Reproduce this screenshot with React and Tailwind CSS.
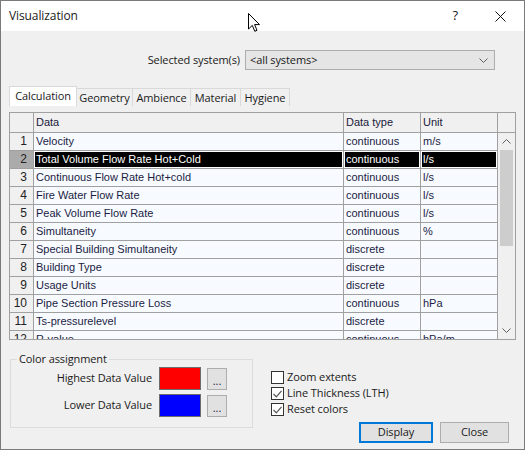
import React from "react";

const ui = "font-['Open_Sans',sans-serif] text-[11px] tracking-[-0.1px]";
const cell = "font-['Liberation_Sans',Arial,sans-serif]";

const rows = [
  ["Velocity", "continuous", "m/s"],
  ["Total Volume Flow Rate Hot+Cold", "continuous", "l/s"],
  ["Continuous Flow Rate Hot+cold", "continuous", "l/s"],
  ["Fire Water Flow Rate", "continuous", "l/s"],
  ["Peak Volume Flow Rate", "continuous", "l/s"],
  ["Simultaneity", "continuous", "%"],
  ["Special Building Simultaneity", "discrete", ""],
  ["Building Type", "discrete", ""],
  ["Usage Units", "discrete", ""],
  ["Pipe Section Pressure Loss", "continuous", "hPa"],
  ["Ts-pressurelevel", "discrete", ""],
  ["R-value", "continuous", "hPa/m"],
];

const tabs = [
  ["Calculation", "w-[68px]"],
  ["Geometry", "w-[56px]"],
  ["Ambience", "w-[58px]"],
  ["Material", "w-[50px]"],
  ["Hygiene", "w-[49px]"],
];

export default function App() {
  return (
    <div className="relative h-[450px] w-[525px] border border-[#7a7a7a] bg-[#f0f0f0] text-[#1a1a1a]">
      <TitleBar />

      <div className={`mt-[19px] flex h-[20px] items-center justify-end pr-[29px] ${ui}`}>
        <span className="mr-[5px]">Selected system(s)</span>
        <div className="flex h-[20px] w-[250px] items-center justify-between border border-[#adadad] bg-[#e5e5e5] pl-[4px] pr-[6px]">
          <span>&lt;all systems&gt;</span>
          <Chevron className="h-[5px] w-[9px]" />
        </div>
      </div>

      <div className={`ml-[8px] mt-[16px] flex h-[20px] items-end ${ui}`}>
        {tabs.map(([t, w], i) =>
          i === 0 ? (
            <div key={t} className={`flex h-[20px] items-center justify-center border border-b-0 border-[#d9d9d9] bg-white ${w}`}>
              {t}
            </div>
          ) : (
            <div key={t} className={`flex h-[18px] items-center justify-center border border-b-0 border-l-0 border-[#d9d9d9] pt-[2px] ${w}`}>
              {t}
            </div>
          )
        )}
      </div>

      <DataTable />

      <div className={`flex ${ui}`}>
        <ColorGroup />
        <div className="ml-[18px] mt-[31px] flex w-[238px] flex-col">
          <Check label="Zoom extents" />
          <Check label="Line Thickness (LTH)" checked />
          <Check label="Reset colors" checked />
          <div className="mt-[3px] flex justify-end gap-[7px]">
            <button className="h-[21px] w-[74px] border-2 border-[#0078d7] bg-[#e1e1e1]">Display</button>
            <button className="h-[21px] w-[69px] border border-[#adadad] bg-[#e1e1e1]">Close</button>
          </div>
        </div>
      </div>

      <svg className="absolute left-[247px] top-[12px]" width="13" height="20" viewBox="0 0 13 20">
        <path d="M0.5 0.5 L0.5 16 L4.3 12.4 L6.8 18.3 L9 17.3 L6.6 11.6 L11.5 11.6 Z" fill="white" stroke="black" strokeWidth="1" />
      </svg>
    </div>
  );
}

function TitleBar() {
  return (
    <div className={`flex h-[30px] items-center bg-white pl-[8px] ${ui} text-[12px]`}>
      <span className="flex-1">Visualization</span>
      <span className="mr-[37px] text-[13px]">?</span>
      <svg className="mr-[18px]" width="11" height="11" viewBox="0 0 11 11">
        <path d="M0.5 0.5 L10.5 10.5 M10.5 0.5 L0.5 10.5" stroke="#111" strokeWidth="1" />
      </svg>
    </div>
  );
}

function Chevron({ className, up }) {
  return (
    <svg className={className} viewBox="0 0 9 5">
      <path d={up ? "M0.5 4.5 L4.5 0.5 L8.5 4.5" : "M0.5 0.5 L4.5 4.5 L8.5 0.5"} fill="none" stroke="#606060" strokeWidth="1" />
    </svg>
  );
}

function DataTable() {
  return (
    <div className={`ml-[8px] mt-[6px] h-[228px] w-[507px] border border-[#a0a0a0] bg-[#f0f0f0] text-[11px] ${cell}`}>
      <div className="flex h-[20px] border-b border-[#a0a0a0] text-[#1a1a3a]">
        <div className="w-[24px] border-r border-[#a0a0a0]" />
        <div className="flex w-[310px] items-center border-r border-[#a0a0a0] pl-[2px]">Data</div>
        <div className="flex w-[77px] items-center border-r border-[#a0a0a0] pl-[2px]">Data type</div>
        <div className="flex w-[77px] items-center border-r border-[#a0a0a0] pl-[2px]">Unit</div>
        <div className="flex-1" />
      </div>
      <div className="flex h-[206px]">
        <div className="h-[206px] w-[488px] overflow-hidden">
          {rows.map((r, i) => (
            <Row key={i} n={i + 1} data={r} selected={i === 1} />
          ))}
        </div>
        <div className="flex w-[17px] flex-col bg-[#f0f0f0]">
          <div className="flex h-[17px] items-center justify-center">
            <Chevron up className="h-[5px] w-[9px]" />
          </div>
          <div className="mx-[2px] h-[96px] bg-[#cdcdcd]" />
          <div className="flex-1" />
          <div className="flex h-[17px] items-center justify-center">
            <Chevron className="h-[5px] w-[9px]" />
          </div>
        </div>
      </div>
    </div>
  );
}

function Row({ n, data, selected }) {
  const base = "h-[17px] border-r border-[#a0a0a0] leading-[15px]";
  const inner = selected
    ? "h-full border border-white bg-black pl-[1px] text-white"
    : "h-full border border-transparent bg-[#f7fbff] pl-[1px] text-[#1c1c44]";
  return (
    <div className="flex h-[18px] border-b border-[#a0a0a0]">
      <div
        className={`w-[24px] border-r border-[#a0a0a0] pr-[6px] text-right text-[12px] leading-[17px] text-[#222] ${
          selected ? "bg-[#ababab]" : "bg-[#f0f0f0]"
        }`}
      >
        {n}
      </div>
      <div className={`w-[310px] ${base}`}>
        <div className={inner}>{data[0]}</div>
      </div>
      <div className={`w-[77px] ${base}`}>
        <div className={inner}>{data[1]}</div>
      </div>
      <div className={`w-[77px] ${base}`}>
        <div className={inner}>{data[2]}</div>
      </div>
    </div>
  );
}

function ColorGroup() {
  return (
    <div className="relative ml-[9px] mt-[19px] h-[69px] w-[243px] border border-[#dcdcdc] pt-[7px]">
      <span className="absolute -top-[9px] left-[6px] bg-[#f0f0f0] px-[2px]">Color assignment</span>
      <SwatchRow label="Highest Data Value" color="bg-[#ff0000]" />
      <div className="h-[4px]" />
      <SwatchRow label="Lower Data Value" color="bg-[#0000ff]" />
    </div>
  );
}

function SwatchRow({ label, color }) {
  return (
    <div className="flex h-[23px] items-center">
      <span className="w-[141px] text-right">{label}</span>
      <div className={`ml-[7px] h-[23px] w-[42px] border border-[#6d6d6d] ${color}`} />
      <button className="ml-[6px] flex h-[22px] w-[20px] items-end justify-center border border-[#adadad] bg-[#e1e1e1] pb-[3px] leading-[10px] text-[#1c1c44]">
        ...
      </button>
    </div>
  );
}

function Check({ label, checked }) {
  return (
    <div className="mb-[3px] flex h-[13px] items-center">
      <div className="flex h-[13px] w-[13px] items-center justify-center border border-[#333] bg-white">
        {checked && (
          <svg width="9" height="8" viewBox="0 0 9 8">
            <path d="M0.5 4 L3.3 6.8 L8.5 0.8" fill="none" stroke="#555" strokeWidth="1.2" />
          </svg>
        )}
      </div>
      <span className="ml-[3px]">{label}</span>
    </div>
  );
}
